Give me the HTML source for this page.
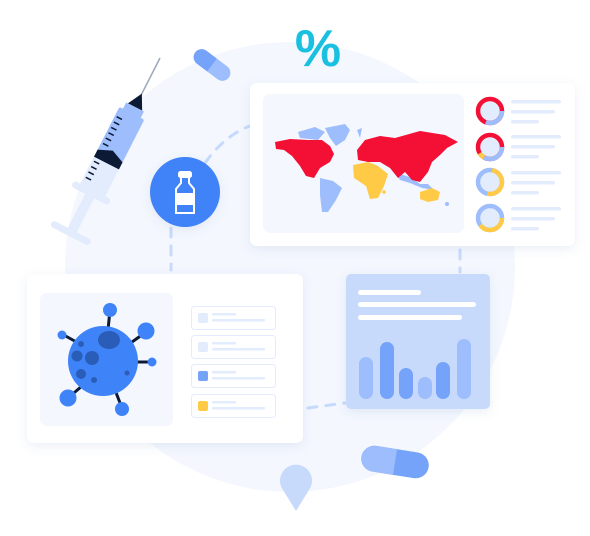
<!DOCTYPE html><html><head><style>html,body{margin:0;padding:0;background:#fff;width:590px;height:536px;overflow:hidden}</style></head><body>
<svg width="590" height="536" viewBox="0 0 590 536" xmlns="http://www.w3.org/2000/svg">
<defs><filter id="sh" x="-20%" y="-20%" width="140%" height="140%"><feDropShadow dx="0" dy="3" stdDeviation="5" flood-color="#5a7bb5" flood-opacity="0.12"/></filter></defs>
<circle cx="290" cy="267" r="225" fill="#f4f7fe"/>
<g stroke="#c8dafc" stroke-width="3" fill="none" stroke-dasharray="9 9" stroke-linecap="round">
<path d="M205 163 Q225 135 250 126"/>
<path d="M171 228 L171 270"/>
<path d="M460 250 L460 272"/>
<path d="M308 408 L345 403"/>
</g>
<g transform="translate(212,65) rotate(37)"><rect x="-21" y="-8" width="42" height="16" rx="8" fill="#9dbdfc"/><path d="M-13 -8 H0 V8 H-13 A8 8 0 0 1 -13 -8Z" fill="#75a3f9"/></g>
<g transform="translate(395,462) rotate(9)"><rect x="-34" y="-13" width="68" height="26" rx="13" fill="#75a3f9"/><path d="M-21 -13 H0 V13 H-21 A13 13 0 0 1 -21 -13Z" fill="#9dbdfc"/></g>
<path d="M296 511 L283 490 A16 16 0 1 1 309 490 Z" fill="#c8dafc"/>
<text x="318" y="66" font-family="Liberation Sans, sans-serif" font-weight="bold" font-size="52" fill="#1ac0e0" text-anchor="middle">%</text>
<g transform="translate(160,58) rotate(27)">
<line x1="0" y1="0" x2="0" y2="44" stroke="#9aa8bd" stroke-width="1.5"/>
<path d="M0 40 L-8 55 L8 55 Z" fill="#0c1a36"/>
<rect x="-10" y="55" width="20" height="12" fill="#9dbdfc"/>
<rect x="-14" y="62" width="28" height="50" rx="2" fill="#9dbdfc"/>
<path d="M-14 110 L0 104 L14 110 L14 118 L-14 118Z" fill="#0c1a36"/>
<rect x="-14" y="118" width="28" height="32" fill="#e3ecfd"/>
<g stroke="#0c1a36" stroke-width="1.5"><line x1="-12" y1="72" x2="-6" y2="72"/><line x1="-12" y1="78" x2="-6" y2="78"/><line x1="-12" y1="84" x2="-6" y2="84"/><line x1="-12" y1="90" x2="-6" y2="90"/><line x1="-12" y1="96" x2="-6" y2="96"/><line x1="-12" y1="102" x2="-6" y2="102"/><line x1="-12" y1="122" x2="-6" y2="122"/><line x1="-12" y1="128" x2="-6" y2="128"/><line x1="-12" y1="134" x2="-6" y2="134"/><line x1="-12" y1="140" x2="-6" y2="140"/></g>
<rect x="-21" y="148" width="42" height="7" rx="3.5" fill="#e3ecfd"/>
<rect x="-5" y="155" width="10" height="40" fill="#e3ecfd"/>
<rect x="-22" y="193" width="44" height="7" rx="3.5" fill="#e3ecfd"/>
</g>
<circle cx="185" cy="192" r="35" fill="#3f83f8" filter="url(#sh)"/>
<g fill="none" stroke="#fff" stroke-width="2"><rect x="179" y="172" width="12" height="5" rx="1.5" fill="#fff"/><path d="M181 178 V183 L176 189 V213 H194 V189 L189 183 V178"/></g>
<rect x="176" y="193" width="18" height="12" fill="#fff"/>
<rect x="250" y="83" width="325" height="163" rx="7" fill="#fff" filter="url(#sh)"/>
<rect x="263" y="94" width="201" height="139" rx="7" fill="#f4f7fe"/>
<g fill="#9dbdfc"><path d="M298 132 L315 127 L325 132 L318 140 L300 138Z"/><path d="M325 128 L345 124 L350 130 L345 140 L336 146 L330 138Z"/><path d="M320 178 L333 181 L342 188 L336 200 L328 212 L322 212 L320 195Z"/><path d="M395 172 L412 178 L420 184 L428 184 L434 190 L422 188 L410 183 L400 180Z"/><circle cx="447" cy="204" r="2"/><path d="M357 130 L362 128 L360 138Z"/></g>
<g fill="#f40f35"><path d="M275 142 L290 139 L308 140 L322 140 L330 146 L334 154 L330 162 L320 168 L314 178 L306 176 L300 166 L292 156 L284 150 L276 149Z"/><path d="M357 150 L365 140 L380 136 L395 138 L420 131 L445 135 L458 142 L447 148 L440 155 L432 162 L428 172 L420 182 L412 180 L405 172 L398 178 L390 168 L380 162 L368 162 L358 160Z"/></g>
<g fill="#ffcb47"><path d="M353 165 L368 162 L378 166 L388 174 L384 186 L378 198 L370 199 L366 186 L354 178Z"/><path d="M420 192 L432 188 L440 192 L438 200 L428 202 L420 199Z"/><circle cx="384" cy="192" r="1.8"/></g>
<g fill="#e3ecfd" stroke-width="4.5">
<circle cx="490" cy="111" r="12"/><circle cx="490" cy="147" r="12"/><circle cx="490" cy="182" r="12"/><circle cx="490" cy="218" r="12"/>
</g>
<g fill="none" stroke-width="4.5">
<circle cx="490" cy="111" r="12" stroke="#f40f35"/><circle cx="490" cy="111" r="12" stroke="#9dbdfc" stroke-dasharray="23 100"/>
<circle cx="490" cy="147" r="12" stroke="#f40f35"/><circle cx="490" cy="147" r="12" stroke="#9dbdfc" stroke-dasharray="25 100"/><circle cx="490" cy="147" r="12" stroke="#ffcb47" stroke-dasharray="0 25 6 100"/>
<circle cx="490" cy="182" r="12" stroke="#9dbdfc"/><circle cx="490" cy="182" r="12" stroke="#ffcb47" stroke-dasharray="38 100" transform="rotate(-80 490 182)"/>
<circle cx="490" cy="218" r="12" stroke="#9dbdfc"/><circle cx="490" cy="218" r="12" stroke="#ffcb47" stroke-dasharray="30 100"/>
</g>
<g fill="#e3ecfd">
<rect x="511" y="100" width="50" height="3.5" rx="1.7"/><rect x="511" y="110" width="44" height="3.5" rx="1.7"/><rect x="511" y="120" width="28" height="3.5" rx="1.7"/>
<rect x="511" y="135" width="50" height="3.5" rx="1.7"/><rect x="511" y="145" width="44" height="3.5" rx="1.7"/><rect x="511" y="155" width="28" height="3.5" rx="1.7"/>
<rect x="511" y="171" width="50" height="3.5" rx="1.7"/><rect x="511" y="181" width="44" height="3.5" rx="1.7"/><rect x="511" y="191" width="28" height="3.5" rx="1.7"/>
<rect x="511" y="207" width="50" height="3.5" rx="1.7"/><rect x="511" y="217" width="44" height="3.5" rx="1.7"/><rect x="511" y="227" width="28" height="3.5" rx="1.7"/>
</g>
<rect x="27" y="274" width="276" height="169" rx="7" fill="#fff" filter="url(#sh)"/>
<rect x="40" y="293" width="133" height="133" rx="7" fill="#f4f7fe"/>
<g stroke="#0c1a36" stroke-width="3"><line x1="110" y1="310" x2="108" y2="330"/><line x1="146" y1="332" x2="132" y2="342"/><line x1="152" y1="362" x2="135" y2="362"/><line x1="62" y1="334" x2="80" y2="344"/><line x1="68" y1="398" x2="82" y2="386"/><line x1="122" y1="408" x2="115" y2="390"/></g>
<g fill="#3f83f8"><circle cx="110" cy="310" r="7"/><circle cx="146" cy="331" r="8.5"/><circle cx="152" cy="362" r="4.5"/><circle cx="62" cy="335" r="4.5"/><circle cx="68" cy="398" r="8.5"/><circle cx="122" cy="409" r="7"/><circle cx="103" cy="361" r="35"/></g>
<g fill="#2a5db8"><ellipse cx="109" cy="340" rx="11" ry="9"/><circle cx="92" cy="358" r="7"/><circle cx="77" cy="356" r="5.5"/><circle cx="81" cy="374" r="5"/><circle cx="81" cy="344" r="3"/><circle cx="94" cy="380" r="3"/><circle cx="127" cy="373" r="2.5"/></g>
<g fill="#fff" stroke="#e3ecfd" stroke-width="1"><rect x="191.5" y="306.5" width="84" height="23" rx="3"/><rect x="191.5" y="335.5" width="84" height="23" rx="3"/><rect x="191.5" y="364.5" width="84" height="23" rx="3"/><rect x="191.5" y="394.5" width="84" height="23" rx="3"/></g>
<rect x="198" y="313" width="10" height="10" rx="2" fill="#e3ecfd"/><rect x="198" y="342" width="10" height="10" rx="2" fill="#e3ecfd"/><rect x="198" y="371" width="10" height="10" rx="2" fill="#75a3f9"/><rect x="198" y="401" width="10" height="10" rx="2" fill="#ffcb47"/>
<g fill="#e3ecfd"><rect x="212" y="313" width="24" height="2.5" rx="1"/><rect x="212" y="319" width="53" height="2.5" rx="1"/><rect x="212" y="342" width="24" height="2.5" rx="1"/><rect x="212" y="348" width="53" height="2.5" rx="1"/><rect x="212" y="371" width="24" height="2.5" rx="1"/><rect x="212" y="377" width="53" height="2.5" rx="1"/><rect x="212" y="401" width="24" height="2.5" rx="1"/><rect x="212" y="407" width="53" height="2.5" rx="1"/></g>
<rect x="346" y="274" width="144" height="135" rx="5" fill="#c8dafc" filter="url(#sh)"/>
<g fill="#fff"><rect x="358" y="290" width="63" height="5" rx="2.5"/><rect x="358" y="302" width="118" height="5" rx="2.5"/><rect x="358" y="315" width="104" height="5" rx="2.5"/></g>
<g><rect x="359" y="357" width="14" height="42" rx="7" fill="#9dbdfc"/><rect x="380" y="342" width="14" height="57" rx="7" fill="#75a3f9"/><rect x="399" y="368" width="14" height="31" rx="7" fill="#75a3f9"/><rect x="418" y="377" width="14" height="22" rx="7" fill="#9dbdfc"/><rect x="436" y="362" width="14" height="37" rx="7" fill="#75a3f9"/><rect x="457" y="339" width="14" height="60" rx="7" fill="#9dbdfc"/></g>
</svg>
</body></html>
